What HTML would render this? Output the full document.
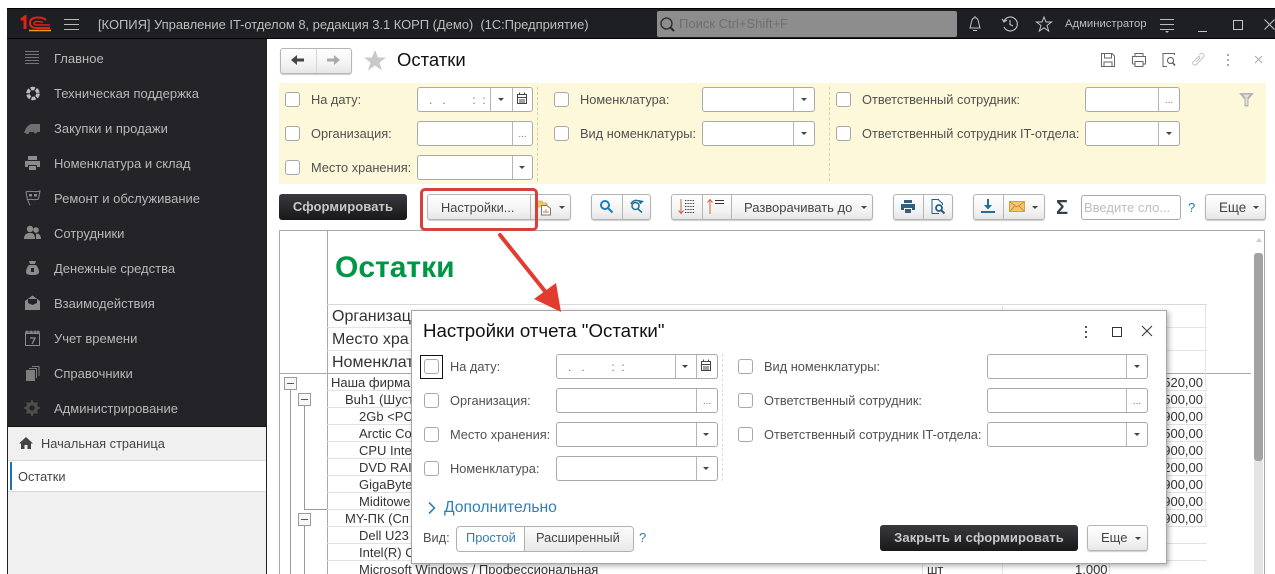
<!DOCTYPE html>
<html lang="ru"><head><meta charset="utf-8"><title>Остатки</title>
<style>
html,body{margin:0;padding:0;background:#fff}
#p{position:relative;width:1275px;height:574px;overflow:hidden;background:#fff;font-family:"Liberation Sans",Arial,sans-serif;font-size:13px;color:#444}
#p div,#p span.a,#p svg{position:absolute}
.t{position:absolute;white-space:nowrap;height:20px;line-height:20px}
.m{color:#b8b8b8;left:54px;font-size:13px}
.l{color:#505050;font-size:12.8px}
.cb{width:13px;height:13px;border:1px solid #a8a8a8;border-radius:3px;background:#fff}
.f{height:23px;border:1px solid #aaa;border-radius:3px;background:#fff}
.s{top:0;bottom:0;width:1px;background:#b5b5b5}
.dd{width:0;height:0;border-left:3px solid transparent;border-right:3px solid transparent;border-top:3px solid #444}
.btn{height:24px;border:1px solid #b5b5b5;border-radius:3px;background:linear-gradient(#fff,#f1f1f1 70%,#e6e6e6);box-shadow:0 1px 1px #ccc}
.dark{background:linear-gradient(#3a3a3e,#18181a);border-radius:3px;color:#c8c8c8;font-weight:bold;text-align:center;letter-spacing:.1px}
.dots{color:#777;font-size:10px;line-height:20px;text-align:center;height:20px}
.r{color:#333;font-size:13px}
.hl{left:327px;width:880px;height:1px;background:#e2e2e2}
.n{right:72px;color:#333;font-size:13px}
</style></head><body><div id="p">

<!-- header -->
<div style="left:7px;top:8px;width:1268px;height:31px;background:#1e1f23;border-top:1px solid #000;box-sizing:border-box;border-bottom:1px solid #000"></div>
<svg style="left:19px;top:15px" width="33" height="18" viewBox="0 0 33 18"><path d="M2 5 L6 2 V14" fill="none" stroke="#e2231a" stroke-width="3"/><path d="M27 5 C25 3 22 2.5 19 2.5 C13 2.5 11 5 11 8 C11 11 13 13 18 13 H31" fill="none" stroke="#e2231a" stroke-width="2"/><path d="M24 7.5 C22 6.5 20 6.5 18.5 6.5 C16 6.500 15 7.500 15 8.500 C15 9.500 16 10 19 10 H31" fill="none" stroke="#e2231a" stroke-width="1.500"/><path d="M10 15.500 H32" stroke="#e2a11a" stroke-width="1.500"/></svg>
<svg style="left:64px;top:18px" width="15" height="13"><path d="M0 1.500H15M0 6.500H15M0 11.500H15" stroke="#bbb"/></svg>
<span class="t" style="left:98px;top:15px;color:#bdbdbd;font-size:13px;letter-spacing:-.05px">[КОПИЯ] Управление IT-отделом 8, редакция 3.1 КОРП (Демо)&nbsp; (1С:Предприятие)</span>
<div style="left:657px;top:11px;width:300px;height:26px;background:#8d8d8d;border-radius:2px"></div>
<svg style="left:659px;top:16px" width="17" height="17" fill="none" stroke="#2a2a2a" stroke-width="1.300"><circle cx="7.500" cy="7.500" r="5.500"/><path d="M11.500 11.500L15 15" stroke-width="2"/></svg>
<span class="t" style="left:679px;top:14px;color:#6f6f6f;font-size:13px">Поиск Ctrl+Shift+F</span>
<svg style="left:967px;top:15px" width="16" height="18" fill="none" stroke="#c4c4c4"><path d="M3 13 C4 10 4 8 5 5 C6 2 10 2 11 5 C12 8 12 10 13 13 Z M6 15.500H10M8 1V2"/></svg>
<svg style="left:1001px;top:15px" width="18" height="18" fill="none" stroke="#c4c4c4" stroke-width="1.100"><path d="M3 6 A7 7 0 1 1 3 12M1 4 L3 7 L6 5M9 5V9.500L12 11"/></svg>
<svg style="left:1035px;top:15px" width="18" height="18" fill="none" stroke="#c4c4c4"><path d="M9 2L11 7H16.500L12 10.500L13.700 16L9 12.800L4.300 16L6 10.500L1.500 7H7Z"/></svg>
<span class="t" style="left:1065px;top:14px;color:#bdbdbd;font-size:11.300px">Администратор</span>
<svg style="left:1160px;top:18px" width="15" height="16" fill="#bbb"><rect y="1" width="14" height="1"/><rect y="6" width="14" height="1"/><rect y="11" width="14" height="1" /><path d="M5 13H9L7 15Z"/></svg>
<div style="left:1198px;top:31px;width:9px;height:1px;background:#c4c4c4"></div>
<div style="left:1233px;top:20px;width:8px;height:8px;border:1px solid #c4c4c4"></div>
<svg style="left:1264px;top:19px" width="11" height="11" stroke="#c4c4c4"><path d="M0.500 0.500L10.500 10.500M10.500 0.500L0.500 10.500"/></svg>

<!-- sidebar -->
<div style="left:7px;top:39px;width:260px;height:387px;background:#242428"></div>
<div style="left:7px;top:426px;width:260px;height:148px;background:#f0f0f0;border-top:1px solid #111;box-sizing:border-box"></div>
<div style="left:7px;top:426px;width:1px;height:148px;background:#222"></div>
<div style="left:266px;top:39px;width:1px;height:535px;background:#222"></div>
<div style="left:8px;top:460px;width:258px;height:32px;background:#fff;border-top:1px solid #d8d8d8;border-bottom:1px solid #d8d8d8;box-sizing:border-box"></div>
<div style="left:10px;top:462px;width:2px;height:28px;background:#1f75b4"></div>

<svg style="left:24px;top:50px" width="16" height="16" stroke="#777"><path d="M1 1.500H15M1 4.500H15M1 7.500H15M1 10.500H15M1 13.500H15"/></svg>
<svg style="left:25px;top:86px" width="16" height="15"><circle cx="8" cy="7.500" r="5" fill="none" stroke="#bbb" stroke-width="3.500" stroke-dasharray="4 1.300"/></svg>
<svg style="left:24px;top:123px" width="17" height="11" fill="#6f6f6f"><path d="M0 10 L2 5 L5 2 L7 1 H16 V9 H13 A1.500 1.500 0 0 1 10 9 H5 A1.500 1.500 0 0 1 2 10 Z"/></svg>
<svg style="left:24px;top:155px" width="17" height="16" fill="#8c8c8c"><path d="M4 1H13V5H4ZM1 6H16V12H13V10H4V12H1ZM5 11H12V15H5Z"/></svg>
<svg style="left:25px;top:190px" width="16" height="16" fill="none" stroke="#8a8a8a"><path d="M1 2C5 0 10 3 15 1L13.500 9C9 11 6 8 2.500 10ZM3 10.500L5 15.500"/><path d="M4 4H7V6.500H4ZM9 4H12V6.500H9Z" fill="#8a8a8a" stroke="none"/></svg>
<svg style="left:24px;top:225px" width="17" height="16" fill="#8c8c8c"><circle cx="6" cy="4" r="3.200"/><circle cx="12" cy="5" r="2.800"/><path d="M0 14C0 9 3 8 6 8C9 8 11 9 11 14ZM12 14H17C17 10 15 8.500 12 8.500Z"/></svg>
<svg style="left:26px;top:260px" width="13" height="16" fill="#8c8c8c"><path d="M3 1H10L9 4H4ZM3 5H10C12 7 13 10 13 12C13 14 11 15 6.500 15C2 15 0 14 0 12C0 10 1 7 3 5Z"/><path d="M5 8H8V12H5Z" fill="#242428"/></svg>
<svg style="left:24px;top:295px" width="17" height="16" fill="#8c8c8c"><path d="M1 6L8.500 0.500L16 6V15H1Z"/><path d="M4 4H13V8L8.500 10L4 8Z" fill="#242428"/></svg>
<svg style="left:24px;top:330px" width="17" height="17" fill="none" stroke="#8c8c8c"><rect x="1.500" y="3.500" width="14" height="12"/><path d="M1 2H16M3 0.500V3M7 0.500V3M11 0.500V3M14 0.500V3M6 8H11L8 14" stroke-width="1.300"/></svg>
<svg style="left:26px;top:365px" width="14" height="16" fill="#7d7d7d"><rect x="0" y="5" width="9" height="11"/><path d="M3 3.500H10.500V13M6 1.500H13V11" fill="none" stroke="#7d7d7d"/></svg>
<svg style="left:24px;top:400px" width="16" height="16"><circle cx="8" cy="8" r="4.500" fill="none" stroke="#4e4e4e" stroke-width="3"/><path d="M8 0V16M0 8H16M2.500 2.500L13.500 13.500M13.500 2.500L2.500 13.500" stroke="#4e4e4e" stroke-width="1.800"/><circle cx="8" cy="8" r="2.500" fill="#242428"/></svg>

<span class="t m" style="top:49px">Главное</span>
<span class="t m" style="top:84px">Техническая поддержка</span>
<span class="t m" style="top:119px">Закупки и продажи</span>
<span class="t m" style="top:154px">Номенклатура и склад</span>
<span class="t m" style="top:189px">Ремонт и обслуживание</span>
<span class="t m" style="top:224px">Сотрудники</span>
<span class="t m" style="top:259px">Денежные средства</span>
<span class="t m" style="top:294px">Взаимодействия</span>
<span class="t m" style="top:329px">Учет времени</span>
<span class="t m" style="top:364px">Справочники</span>
<span class="t m" style="top:399px">Администрирование</span>
<svg style="left:19px;top:437px" width="14" height="12" fill="#444"><path d="M7 0L14 6.500H12V12H8.500V8H5.500V12H2V6.500H0Z"/></svg>
<span class="t" style="left:41px;top:434px;font-size:12.800px;color:#444">Начальная страница</span>
<span class="t" style="left:18px;top:467px;font-size:12.800px;color:#444">Остатки</span>

<!-- nav -->
<div class="btn" style="left:280px;top:48px;width:70px"><div class="s" style="left:35px;background:#d5d5d5"></div></div>
<svg style="left:291px;top:54px" width="14" height="12" fill="#444"><path d="M0 6L6 1V4.500H13V7.500H6V11Z"/></svg>
<svg style="left:326px;top:54px" width="14" height="12" fill="#aaa"><path d="M14 6L8 1V4.500H1V7.500H8V11Z"/></svg>
<svg style="left:363px;top:49px" width="24" height="23" fill="#c9c9c9"><path d="M12 1L15 8.500H23L16.500 13.500L19 21.500L12 16.500L5 21.500L7.500 13.500L1 8.500H9Z"/></svg>
<span class="t" style="left:397px;top:50px;font-size:18.500px;color:#111">Остатки</span>
<svg style="left:1100px;top:52px" width="16" height="16" fill="none" stroke="#666"><path d="M1.500 1.500H12L14.500 4V14.500H1.500ZM4.500 1.500V6H11.500V1.500M4 14.500V10H12V14.500"/></svg>
<svg style="left:1131px;top:52px" width="16" height="16" fill="none" stroke="#666"><path d="M4 4.500V1.500H12V4.500M1.500 12V4.500H14.500V12H12M4 12H1.500M4 9.500H12V14.500H4Z"/></svg>
<svg style="left:1161px;top:52px" width="16" height="16" fill="none" stroke="#666"><path d="M13.500 3V1.500H2V14.500H6M6 1.500V1"/><circle cx="9.500" cy="8.500" r="3" stroke="#555"/><path d="M11.500 10.500L14 13.500" stroke="#555" stroke-width="1.500"/></svg>
<svg style="left:1190px;top:52px" width="16" height="16" fill="none" stroke="#c4c4c4"><path d="M9 3L11 1.500C13 0.500 15 3 13.500 5L7 12C5 14 2 12.500 3 10L8 5C9 4 10.500 5 9.500 6.500L6 10"/></svg>
<svg style="left:1226px;top:54px" width="4" height="13" fill="#aaa"><rect y="0" x="1" width="2" height="2"/><rect y="5" x="1" width="2" height="2"/><rect y="10" x="1" width="2" height="2"/></svg>
<svg style="left:1254px;top:55px" width="9" height="9" stroke="#aaa"><path d="M1 1L8 8M8 1L1 8"/></svg>

<!-- filter panel -->
<div style="left:279px;top:83px;width:987px;height:101px;background:#fef8da"></div>
<div style="left:537px;top:87px;width:0;height:94px;border-left:1px dashed #d9d2a6"></div>
<div style="left:829px;top:87px;width:0;height:94px;border-left:1px dashed #d9d2a6"></div>

<div class="cb" style="left:285px;top:92px"></div><span class="t l" style="left:311px;top:90px">На дату:</span>
<div class="cb" style="left:285px;top:126px"></div><span class="t l" style="left:311px;top:124px">Организация:</span>
<div class="cb" style="left:285px;top:160px"></div><span class="t l" style="left:311px;top:158px">Место хранения:</span>
<div class="cb" style="left:554px;top:92px"></div><span class="t l" style="left:580px;top:90px">Номенклатура:</span>
<div class="cb" style="left:554px;top:126px"></div><span class="t l" style="left:580px;top:124px">Вид номенклатуры:</span>
<div class="cb" style="left:836px;top:92px"></div><span class="t l" style="left:862px;top:90px">Ответственный сотрудник:</span>
<div class="cb" style="left:836px;top:126px"></div><span class="t l" style="left:862px;top:124px">Ответственный сотрудник IT-отдела:</span>

<div class="f" style="left:417px;top:87px;width:114px"><div class="s" style="left:72px"></div><div class="s" style="left:94px"></div><div class="dd" style="left:80px;top:10px"></div>
<span class="t" style="left:11px;top:2px;font-size:12px;color:#777;letter-spacing:0">.&nbsp;&nbsp; .&nbsp;&nbsp;&nbsp;&nbsp;&nbsp;&nbsp;&nbsp;&nbsp;:&nbsp; :</span>
<svg style="left:98px;top:4px" width="12" height="13" fill="none" stroke="#444"><rect x="1.500" y="2.500" width="9" height="9"/><path d="M1 5.500H11M3.500 0.500V2.500M8.500 0.500V2.500M3 8H9M3 10H9" /></svg></div>
<div class="f" style="left:417px;top:121px;width:114px"><div class="s" style="left:94px"></div><div class="t dots" style="left:95px;width:19px;top:3px">...</div></div>
<div class="f" style="left:417px;top:155px;width:114px"><div class="s" style="left:94px"></div><div class="dd" style="left:101px;top:10px"></div></div>
<div class="f" style="left:702px;top:87px;width:111px"><div class="s" style="left:90px"></div><div class="dd" style="left:98px;top:10px"></div></div>
<div class="f" style="left:702px;top:121px;width:111px"><div class="s" style="left:90px"></div><div class="dd" style="left:98px;top:10px"></div></div>
<div class="f" style="left:1085px;top:87px;width:93px"><div class="s" style="left:72px"></div><div class="t dots" style="left:73px;width:20px;top:3px">...</div></div>
<div class="f" style="left:1085px;top:121px;width:93px"><div class="s" style="left:72px"></div><div class="dd" style="left:80px;top:10px"></div></div>
<svg style="left:1239px;top:93px" width="15" height="14" fill="#b3b3b3"><path d="M0 0H15L9.500 6.500V13.500H5.500V6.500Z"/><path d="M4 1.500H11L8.500 4.500V12H6.500V4.500Z" fill="#ddd"/></svg>

<!-- toolbar -->
<div class="t dark" style="left:279px;top:194px;width:128px;height:26px;line-height:26px;font-size:13px">Сформировать</div>
<div class="btn" style="left:427px;top:194px;width:142px"><div class="s" style="left:102px"></div><div class="dd" style="left:131px;top:11px"></div></div>
<span class="t" style="left:441px;top:198px;font-size:12.800px;color:#444">Настройки...</span>
<svg style="left:536px;top:199px" width="16" height="17"><path d="M1 2H6L7 4H11V8H1Z" fill="#f0c85a" stroke="#c99a2a" stroke-width=".6"/><path d="M5.500 6.500H11L14.500 9.500V16H5.500Z" fill="#fff" stroke="#777"/><path d="M8 14V12M10 14V10.500M12 14V12.500" stroke="#b76a2a"/></svg>

<div class="btn" style="left:591px;top:194px;width:58px"><div class="s" style="left:30px"></div></div>
<svg style="left:599px;top:199px" width="15" height="15" fill="none" stroke="#1c7db5" stroke-width="2"><circle cx="6" cy="6" r="4"/><path d="M9 9L13.500 13.500"/></svg>
<svg style="left:629px;top:199px" width="16" height="15" fill="none" stroke="#1f6f96" stroke-width="1.500"><circle cx="6.500" cy="7" r="3.500"/><path d="M9 10L13 13.500M2 5C3 2 7 0 11 2.500"/><path d="M15 2L11 5.500L9.500 1Z" fill="#1f6f96" stroke="none"/></svg>

<div class="btn" style="left:671px;top:194px;width:200px"><div class="s" style="left:30px"></div><div class="s" style="left:59px"></div><div class="dd" style="left:189px;top:11px"></div></div>
<svg style="left:678px;top:198px" width="18" height="17" fill="none"><path d="M3 1V15M0.500 12.500L3 15.500L5.500 12.500" stroke="#c5683a"/><path d="M7 2.500H16M7 5.500H16M7 8.500H16M7 11.500H16M7 14.500H16" stroke="#444" stroke-dasharray="1 .6"/></svg>
<svg style="left:707px;top:198px" width="18" height="17" fill="none"><path d="M3 16V2M0.500 4.500L3 1.500L5.500 4.500" stroke="#c5683a"/><path d="M8 2.500H17M8 5.500H17" stroke="#333"/></svg>
<span class="t" style="left:744px;top:198px;font-size:13px;color:#444">Разворачивать до</span>

<div class="btn" style="left:893px;top:194px;width:58px"><div class="s" style="left:29px"></div></div>
<svg style="left:900px;top:199px" width="16" height="15" fill="#345f7a"><path d="M4 1H12V4H4ZM1 5H15V11H12V9H4V11H1ZM5 10H11V14H5Z"/></svg>
<svg style="left:930px;top:198px" width="16" height="17" fill="none" stroke="#1f5f86"><path d="M9 1.500H2V15.500H9M8 1.500L12.500 5.500V7"/><circle cx="9" cy="10" r="3" stroke-width="1.800"/><path d="M11 12L14.500 15.500" stroke-width="2"/></svg>

<div class="btn" style="left:973px;top:194px;width:70px"><div class="s" style="left:29px"></div><div class="dd" style="left:58px;top:11px"></div></div>
<svg style="left:980px;top:199px" width="16" height="15" fill="#1f6f96"><path d="M7 0H9V6H12L8 10.500L4 6H7ZM1 12H15V14H1Z"/></svg>
<svg style="left:1009px;top:201px" width="16" height="11"><rect x=".5" y=".5" width="15" height="10" fill="#f2c568" stroke="#d6a23e"/><path d="M1 1L8 6L15 1M1 10L6 5M15 10L10 5" fill="none" stroke="#b5812c" stroke-width=".7"/></svg>
<span class="t" style="left:1056px;top:198px;font-size:20px;font-weight:bold;color:#33414a">Σ</span>
<div style="left:1081px;top:195px;width:98px;height:23px;border:1px solid #aaa;border-radius:3px;background:#fff"></div>
<span class="t" style="left:1084px;top:198px;font-size:13px;color:#bdbdbd">Введите сло...</span>
<span class="t" style="left:1188px;top:198px;font-size:13px;color:#1f7ab5">?</span>
<div class="btn" style="left:1205px;top:194px;width:59px"><div class="dd" style="left:47px;top:11px"></div></div>
<span class="t" style="left:1219px;top:198px;font-size:13.400px;color:#444">Еще</span>

<!-- report -->
<div style="left:279px;top:230px;width:986px;height:344px;border:1px solid #a9a9a9;border-bottom:0;box-sizing:border-box"></div>
<div style="left:327px;top:231px;width:1px;height:343px;background:#a9a9a9"></div>
<span class="t" style="left:335px;top:252px;height:32px;line-height:32px;font-size:30px;font-weight:bold;color:#009646">Остатки</span>
<div style="left:327px;top:304px;width:880px;height:1px;background:#d8d8d8"></div>
<div style="left:327px;top:327px;width:880px;height:1px;background:#e4e4e4"></div>
<div style="left:327px;top:350px;width:880px;height:1px;background:#e4e4e4"></div>
<div style="left:279px;top:373px;width:972px;height:1px;background:#a9a9a9"></div>
<div style="left:1002px;top:304px;width:1px;height:270px;background:#e4e4e4"></div>
<div style="left:1205px;top:304px;width:1px;height:222px;background:#e4e4e4"></div>
<div style="left:1109px;top:374px;width:1px;height:200px;background:#e4e4e4"></div>
<div style="left:922px;top:374px;width:1px;height:200px;background:#e4e4e4"></div>
<span class="t" style="left:332px;top:307px;font-size:16px;color:#333">Организац</span>
<span class="t" style="left:332px;top:330px;font-size:16px;color:#333">Место хра</span>
<span class="t" style="left:332px;top:353px;font-size:16px;color:#333">Номенклат</span>

<div class="hl" style="top:390px"></div><div class="hl" style="top:407px"></div><div class="hl" style="top:424px"></div><div class="hl" style="top:441px"></div><div class="hl" style="top:458px"></div><div class="hl" style="top:475px"></div><div class="hl" style="top:492px"></div><div class="hl" style="top:509px"></div><div class="hl" style="top:526px"></div><div class="hl" style="top:543px"></div><div class="hl" style="top:560px"></div>

<!-- tree -->
<svg style="left:280px;top:374px" width="48" height="200" fill="none" stroke="#999"><path d="M10.500 15V200M24.500 31V135.500H47M24.500 151V200"/><rect x="4.500" y="3.500" width="12" height="12" fill="#f6f6f6"/><rect x="18.500" y="19.500" width="12" height="12" fill="#f6f6f6"/><rect x="18.500" y="139.500" width="12" height="12" fill="#f6f6f6"/><path d="M7 9.500H14M21 25.500H28M21 145.500H28" stroke="#555"/></svg>
<span class="t r" style="left:331px;top:373px">Наша фирма</span>
<span class="t r" style="left:345px;top:390px">Buh1 (Шуст</span>
<span class="t r" style="left:359px;top:407px">2Gb &lt;PC</span>
<span class="t r" style="left:359px;top:424px">Arctic Co</span>
<span class="t r" style="left:359px;top:441px">CPU Inte</span>
<span class="t r" style="left:359px;top:458px">DVD RAI</span>
<span class="t r" style="left:359px;top:475px">GigaByte</span>
<span class="t r" style="left:359px;top:492px">Miditowe</span>
<span class="t r" style="left:345px;top:509px">MY-ПК (Сп</span>
<span class="t r" style="left:359px;top:526px">Dell U23</span>
<span class="t r" style="left:359px;top:543px">Intel(R) C</span>
<span class="t r" style="left:359px;top:560px">Microsoft Windows / Профессиональная</span>
<span class="t r" style="left:927px;top:560px">шт</span>
<span class="t r" style="left:1075px;top:560px">1.000</span>
<span class="t n" style="top:373px">520,00</span>
<span class="t n" style="top:390px">500,00</span>
<span class="t n" style="top:407px">900,00</span>
<span class="t n" style="top:424px">500,00</span>
<span class="t n" style="top:441px">900,00</span>
<span class="t n" style="top:458px">200,00</span>
<span class="t n" style="top:475px">900,00</span>
<span class="t n" style="top:492px">900,00</span>
<span class="t n" style="top:509px">900,00</span>

<!-- scrollbar -->
<div style="left:1254px;top:253px;width:9px;height:208px;background:#a3a3a3;border-radius:3px"></div>
<div style="left:1254px;top:461px;width:9px;height:113px;background:#e4e4e4"></div>
<div style="left:1256px;top:238px;width:0;height:0;border-left:3px solid transparent;border-right:3px solid transparent;border-bottom:4px solid #ccc"></div>

<!-- dialog -->
<div style="left:411px;top:310px;width:756px;height:254px;background:#fff;border:1px solid #a6a6a6;box-sizing:border-box;box-shadow:2px 2px 5px rgba(0,0,0,.3)"></div>
<span class="t" style="left:423px;top:320px;height:22px;line-height:22px;font-size:18.700px;color:#111">Настройки отчета "Остатки"</span>
<svg style="left:1084px;top:326px" width="4" height="12" fill="#555"><rect x="1" y="0" width="2" height="2"/><rect x="1" y="5" width="2" height="2"/><rect x="1" y="10" width="2" height="2"/></svg>
<div style="left:1112px;top:327px;width:8px;height:8px;border:1px solid #333"></div>
<svg style="left:1141px;top:325px" width="12" height="12" stroke="#333"><path d="M1 1L11 11M11 1L1 11"/></svg>

<div style="left:420px;top:355px;width:21px;height:22px;border:1px solid #111"></div>
<div class="cb" style="left:424px;top:359px"></div><span class="t l" style="left:450px;top:357px">На дату:</span>
<div class="cb" style="left:424px;top:393px"></div><span class="t l" style="left:450px;top:391px">Организация:</span>
<div class="cb" style="left:424px;top:427px"></div><span class="t l" style="left:450px;top:425px">Место хранения:</span>
<div class="cb" style="left:424px;top:461px"></div><span class="t l" style="left:450px;top:459px">Номенклатура:</span>
<div style="left:722px;top:354px;width:0;height:127px;border-left:1px dashed #ddd"></div>
<div class="cb" style="left:738px;top:359px"></div><span class="t l" style="left:764px;top:357px">Вид номенклатуры:</span>
<div class="cb" style="left:738px;top:393px"></div><span class="t l" style="left:764px;top:391px">Ответственный сотрудник:</span>
<div class="cb" style="left:738px;top:427px"></div><span class="t l" style="left:764px;top:425px">Ответственный сотрудник IT-отдела:</span>

<div class="f" style="left:556px;top:354px;width:160px"><div class="s" style="left:118px"></div><div class="s" style="left:139px"></div><div class="dd" style="left:125px;top:10px"></div>
<span class="t" style="left:11px;top:2px;font-size:12px;color:#777">.&nbsp;&nbsp; .&nbsp;&nbsp;&nbsp;&nbsp;&nbsp;&nbsp;&nbsp;&nbsp;:&nbsp; :</span>
<svg style="left:143px;top:4px" width="12" height="13" fill="none" stroke="#444"><rect x="1.500" y="2.500" width="9" height="9"/><path d="M1 5.500H11M3.500 0.500V2.500M8.500 0.500V2.500M3 8H9M3 10H9"/></svg></div>
<div class="f" style="left:556px;top:388px;width:160px"><div class="s" style="left:139px"></div><div class="t dots" style="left:140px;width:20px;top:3px">...</div></div>
<div class="f" style="left:556px;top:422px;width:160px"><div class="s" style="left:139px"></div><div class="dd" style="left:146px;top:10px"></div></div>
<div class="f" style="left:556px;top:456px;width:160px"><div class="s" style="left:139px"></div><div class="dd" style="left:146px;top:10px"></div></div>
<div class="f" style="left:987px;top:354px;width:159px"><div class="s" style="left:138px"></div><div class="dd" style="left:146px;top:10px"></div></div>
<div class="f" style="left:987px;top:388px;width:159px"><div class="s" style="left:138px"></div><div class="t dots" style="left:139px;width:20px;top:3px">...</div></div>
<div class="f" style="left:987px;top:422px;width:159px"><div class="s" style="left:138px"></div><div class="dd" style="left:146px;top:10px"></div></div>

<svg style="left:427px;top:501px" width="10" height="14" fill="none" stroke="#2f80b8" stroke-width="1.600"><path d="M2 1.500L7.500 7L2 12.500"/></svg>
<span class="t" style="left:444px;top:498px;font-size:15.700px;color:#2f80b8">Дополнительно</span>
<span class="t l" style="left:423px;top:528px">Вид:</span>
<div style="left:456px;top:526px;width:176px;height:24px;border:1px solid #b0b0b0;border-radius:4px;overflow:hidden;background:#fff"><div style="left:67px;top:0;bottom:0;right:0;background:linear-gradient(#fbfbfb,#e9e9e9);border-left:1px solid #b0b0b0"></div></div>
<span class="t" style="left:466px;top:528px;font-size:12.800px;color:#2f7fb7">Простой</span>
<span class="t" style="left:536px;top:528px;font-size:12.800px;color:#444">Расширенный</span>
<span class="t" style="left:639px;top:528px;font-size:13px;color:#2f7fb7">?</span>
<div class="t dark" style="left:880px;top:525px;width:198px;height:26px;line-height:26px;font-size:13px">Закрыть и сформировать</div>
<div class="btn" style="left:1087px;top:525px;width:59px"><div class="dd" style="left:47px;top:11px"></div></div>
<span class="t" style="left:1101px;top:528px;font-size:13px;color:#444">Еще</span>

<!-- annotation -->
<div style="left:420px;top:188px;width:112px;height:37px;border:3px solid #d6423a;border-radius:5px"></div>
<svg style="left:480px;top:225px" width="100" height="95"><path d="M20 10L68 70" stroke="#e23c30" stroke-width="4" stroke-linecap="round"/><path d="M81 87L54 74L76 58Z" fill="#e23c30"/></svg>
</div></body></html>
